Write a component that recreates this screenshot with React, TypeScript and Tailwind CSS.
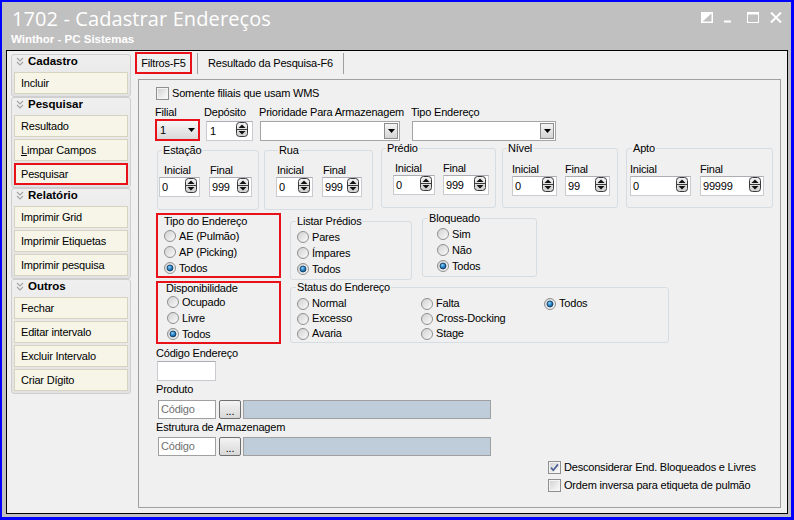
import React from "react";

function Tri() {
  return (
    <svg width="7" height="4" viewBox="0 0 7 4" className="shrink-0">
      <polygon points="0,0 7,0 3.5,4" fill="#000" />
    </svg>
  );
}

function Spin() {
  return (
    <svg width="12" height="15" viewBox="0 0 12 15" className="shrink-0 mb-[3px]">
      <defs>
        <linearGradient id="spg" x1="0" y1="0" x2="0" y2="1">
          <stop offset="0" stopColor="#f4f4f4" />
          <stop offset="1" stopColor="#cfcfcf" />
        </linearGradient>
      </defs>
      <rect x="0.5" y="0.5" width="11" height="14" rx="3" fill="url(#spg)" stroke="#3a3a3a" />
      <line x1="1" y1="7.5" x2="11" y2="7.5" stroke="#3a3a3a" />
      <path d="M2.5 6 L6 2.5 L9.5 6 Z" fill="#111" />
      <path d="M2.5 9 L6 12.5 L9.5 9 Z" fill="#111" />
    </svg>
  );
}

function Radio({ checked }: { checked?: boolean }) {
  return (
    <svg width="12" height="12" viewBox="0 0 12 12" className="shrink-0">
      <defs>
        <linearGradient id="rbg" x1="0" y1="0" x2="1" y2="1">
          <stop offset="0" stopColor="#cfcfcf" />
          <stop offset="1" stopColor="#fcfcfc" />
        </linearGradient>
        <radialGradient id="rdot" cx="0.4" cy="0.35" r="0.7">
          <stop offset="0" stopColor="#8fd3ff" />
          <stop offset="0.5" stopColor="#2a86c9" />
          <stop offset="1" stopColor="#0c4a7d" />
        </radialGradient>
      </defs>
      <circle cx="6" cy="6" r="5.5" fill="url(#rbg)" stroke="#8e8f8f" />
      {checked && <circle cx="6" cy="6" r="3" fill="url(#rdot)" stroke="#12395c" strokeWidth="0.8" />}
    </svg>
  );
}

function Check({ checked }: { checked?: boolean }) {
  return (
    <svg width="13" height="13" viewBox="0 0 13 13" className="shrink-0">
      <defs>
        <linearGradient id="cbg" x1="0" y1="0" x2="1" y2="1">
          <stop offset="0" stopColor="#d4d4d4" />
          <stop offset="1" stopColor="#fafafa" />
        </linearGradient>
      </defs>
      <rect x="0.5" y="0.5" width="12" height="12" fill="#f4f4f4" stroke="#8e8f8f" />
      <rect x="2" y="2" width="9" height="9" fill="url(#cbg)" />
      {checked && <path d="M3 6.6 L5.3 9.2 L10 3.4" fill="none" stroke="#4b5f95" strokeWidth="1.7" />}
    </svg>
  );
}

function Chevrons() {
  return (
    <svg width="8" height="9" viewBox="0 0 8 9" className="shrink-0 mt-[2px]">
      <path d="M1 1 L4 4 L7 1 M1 5 L4 8 L7 5" fill="none" stroke="#a3a3a3" strokeWidth="1.1" />
    </svg>
  );
}

function SideItem({ children, red }: { children: React.ReactNode; red?: boolean }) {
  return (
    <div
      className={
        red
          ? "h-[22px] flex items-center pl-[5px] bg-[#f6f5e7] border-2 border-[#e8111a]"
          : "h-[22px] flex items-center pl-[6px] bg-[#f6f5e7] border border-[#d6d4c0]"
      }
    >
      {children}
    </div>
  );
}

function SideGroup({ title, children }: { title: string; children: React.ReactNode }) {
  return (
    <div className="w-[120px] border border-[#cfcfcf] rounded-[3px] bg-gradient-to-b from-[#efefef] to-[#e2e2e2] pb-[2px]">
      <div className="h-[17px] flex items-start pl-[4px] gap-[4px]">
        <Chevrons />
        <span className="font-bold text-[11.5px] leading-[13px] tracking-[0px]">{title}</span>
      </div>
      <div className="flex flex-col gap-[2px] px-[2px]">{children}</div>
    </div>
  );
}

const inputCls = "bg-white border border-[#c9cbd0] border-t-[#abadb3]";

function SpinCol({
  label,
  value,
  w,
  colCls,
  labelCls,
}: {
  label: string;
  value: string;
  w: string;
  colCls: string;
  labelCls: string;
}) {
  return (
    <div className={`flex flex-col ${colCls}`}>
      <div className={`h-[13px] leading-[13px] ${labelCls}`}>{label}</div>
      <div className={`${inputCls} ${w} h-[20px] flex items-center justify-between pl-[2px] pr-[2px]`}>
        <span>{value}</span>
        <Spin />
      </div>
    </div>
  );
}

function Group({
  legend,
  legendCls,
  className,
  children,
}: {
  legend: string;
  legendCls: string;
  className: string;
  children: React.ReactNode;
}) {
  return (
    <fieldset className={`border border-[#d5dde3] rounded-[3px] min-w-0 ${className}`}>
      <legend className={`px-[1px] leading-[13px] ${legendCls}`}>{legend}</legend>
      {children}
    </fieldset>
  );
}

function RadioRow({ label, checked, cls }: { label: string; checked?: boolean; cls: string }) {
  return (
    <div className={`flex items-center ${cls}`}>
      <Radio checked={checked} />
      <span className="ml-[3px] whitespace-nowrap">{label}</span>
    </div>
  );
}

function Combo({ w }: { w: string }) {
  return (
    <div className={`bg-white border border-[#a5a5a5] ${w} h-[20px] flex items-center justify-end pr-[1px]`}>
      <div className="w-[14px] h-[16px] border border-[#8c8c8c] bg-gradient-to-b from-[#f4f4f4] to-[#d4d4d4] flex items-center justify-center">
        <Tri />
      </div>
    </div>
  );
}

export default function App() {
  return (
    <div className="w-[794px] h-[520px] bg-[#0000ff] pt-[2px] pl-[2px] pr-[3px] pb-[3px] font-['Liberation_Sans',Arial,sans-serif] text-[11px] tracking-[-0.2px] text-black">
      <div className="w-full h-full bg-[#c0c0c0] flex flex-col">
        {/* Title bar */}
        <div className="h-[48px] shrink-0 flex justify-between">
          <div className="flex flex-col pl-[10px] pt-[5px] text-white">
            <div className="font-['Open_Sans',sans-serif] text-[20px] leading-[24px] tracking-[0.1px]">
              1702 - Cadastrar Endereços
            </div>
            <div className="font-bold text-[11.5px] leading-[13px] tracking-[0px] mt-[2px] -ml-[1px]">
              Winthor - PC Sistemas
            </div>
          </div>
          <div className="flex items-start pt-[10px] pr-[9px]">
            <svg width="12" height="11" viewBox="0 0 12 11">
              <polygon points="0,0 12,0 0,11" fill="#fff" />
              <rect x="0.75" y="0.75" width="10.5" height="9.5" fill="none" stroke="#fff" strokeWidth="1.5" />
            </svg>
            <svg width="8" height="11" viewBox="0 0 8 11" className="ml-[11px]">
              <rect x="0" y="8.5" width="7" height="2" fill="#fff" />
            </svg>
            <svg width="12" height="11" viewBox="0 0 12 11" className="ml-[15px]">
              <rect x="0.5" y="0.5" width="11" height="10" fill="none" stroke="#fff" />
              <rect x="0" y="0" width="12" height="2.5" fill="#fff" />
            </svg>
            <svg width="12" height="11" viewBox="0 0 12 11" className="ml-[11px]">
              <path d="M1 0.5 L11 10.5 M11 0.5 L1 10.5" stroke="#fff" strokeWidth="2" />
            </svg>
          </div>
        </div>

        {/* Inner panel */}
        <div className="ml-[4px] mr-[3px] mb-[3px] flex-1 border border-black bg-[#f0f0f0] flex">
          {/* Sidebar */}
          <div className="pl-[4px] pt-[3px] flex flex-col">
            <SideGroup title="Cadastro">
              <SideItem>Incluir</SideItem>
            </SideGroup>
            <SideGroup title="Pesquisar">
              <SideItem>Resultado</SideItem>
              <SideItem>
                <span>
                  <span className="underline">L</span>impar Campos
                </span>
              </SideItem>
              <SideItem red>Pesquisar</SideItem>
            </SideGroup>
            <SideGroup title="Relatório">
              <SideItem>Imprimir Grid</SideItem>
              <SideItem>Imprimir Etiquetas</SideItem>
              <SideItem>Imprimir pesquisa</SideItem>
            </SideGroup>
            <SideGroup title="Outros">
              <SideItem>Fechar</SideItem>
              <SideItem>Editar intervalo</SideItem>
              <SideItem>Excluir Intervalo</SideItem>
              <SideItem>Criar Dígito</SideItem>
            </SideGroup>
          </div>

          {/* Main */}
          <div className="ml-[4px] pt-[1px] flex flex-col">
            <div className="flex items-center h-[22px]">
              <div className="w-[57px] h-[22px] border-2 border-[#e8111a] flex items-center justify-center whitespace-nowrap">
                Filtros-F5
              </div>
              <div className="ml-[5px] w-px h-[21px] bg-[#a0a0a0]" />
              <div className="ml-[10px] w-[125px] whitespace-nowrap">Resultado da Pesquisa-F6</div>
              <div className="ml-[10px] w-px h-[21px] bg-[#a0a0a0]" />
            </div>

            <div className="mt-[5px] ml-[3px] w-[643px] h-[429px] border border-[#a0a0a0] flex flex-col">
              {/* Row A */}
              <div className="mt-[7px] ml-[17px] flex items-center h-[13px]">
                <Check />
                <span className="ml-[3px]">Somente filiais que usam WMS</span>
              </div>

              {/* Row B */}
              <div className="mt-[6px] ml-[16px] flex">
                <div className="w-[46px] flex flex-col">
                  <div className="h-[13px] leading-[13px]">Filial</div>
                  <div className="w-[45px] h-[22px] border-2 border-[#e8111a] bg-gradient-to-b from-[#f7f7f7] to-[#d9d9d9] flex items-center justify-between pl-[3px] pr-[3px]">
                    <span>1</span>
                    <Tri />
                  </div>
                </div>
                <div className="ml-[3px] w-[49px] flex flex-col">
                  <div className="h-[13px] leading-[13px]">Depósito</div>
                  <div className={`${inputCls} ml-[2px] mt-[2px] w-[47px] h-[20px] flex items-center justify-between pl-[3px] pr-[4px]`}>
                    <span>1</span>
                    <Spin />
                  </div>
                </div>
                <div className="ml-[6px] w-[141px] flex flex-col">
                  <div className="h-[13px] leading-[13px] whitespace-nowrap">Prioridade Para Armazenagem</div>
                  <div className="ml-[1px] mt-[2px]">
                    <Combo w="w-[140px]" />
                  </div>
                </div>
                <div className="ml-[11px] w-[145px] flex flex-col">
                  <div className="h-[13px] leading-[13px] whitespace-nowrap">Tipo Endereço</div>
                  <div className="ml-[1px] mt-[2px]">
                    <Combo w="w-[144px]" />
                  </div>
                </div>
              </div>

              {/* Row C */}
              <div className="ml-[18px] flex items-start">
                <Group legend="Estação" legendCls="ml-[4px]" className="mt-[3px] w-[102px] h-[66px]">
                  <div className="flex mt-[7px]">
                    <SpinCol label="Inicial" value="0" w="w-[41px]" colCls="ml-[1px]" labelCls="ml-[5px]" />
                    <SpinCol label="Final" value="999" w="w-[43px]" colCls="ml-[9px]" labelCls="ml-[1px]" />
                  </div>
                </Group>
                <Group legend="Rua" legendCls="ml-[13px]" className="ml-[5px] mt-[3px] w-[109px] h-[66px]">
                  <div className="flex mt-[7px]">
                    <SpinCol label="Inicial" value="0" w="w-[37px]" colCls="ml-[11px]" labelCls="ml-[1px]" />
                    <SpinCol label="Final" value="999" w="w-[40px]" colCls="ml-[9px]" labelCls="ml-[1px]" />
                  </div>
                </Group>
                <Group legend="Prédio" legendCls="ml-[4px]" className="ml-[8px] mt-[1px] w-[115px] h-[66px]">
                  <div className="flex mt-[7px]">
                    <SpinCol label="Inicial" value="0" w="w-[42px]" colCls="ml-[11px]" labelCls="ml-[2px]" />
                    <SpinCol label="Final" value="999" w="w-[46px]" colCls="ml-[8px]" labelCls="ml-0" />
                  </div>
                </Group>
                <Group legend="Nível" legendCls="ml-[4px]" className="ml-[6px] mt-[1px] w-[116px] h-[66px]">
                  <div className="flex mt-[8px]">
                    <SpinCol label="Inicial" value="0" w="w-[45px]" colCls="ml-[9px]" labelCls="ml-0" />
                    <SpinCol label="Final" value="99" w="w-[45px]" colCls="ml-[8px]" labelCls="ml-0" />
                  </div>
                </Group>
                <Group legend="Apto" legendCls="ml-[5px]" className="ml-[8px] mt-[1px] w-[147px] h-[66px]">
                  <div className="flex mt-[8px]">
                    <SpinCol label="Inicial" value="0" w="w-[61px]" colCls="ml-[3px]" labelCls="ml-0" />
                    <SpinCol label="Final" value="99999" w="w-[64px]" colCls="ml-[9px]" labelCls="ml-0" />
                  </div>
                </Group>
              </div>

              {/* Row D */}
              <div className="mt-[3px] ml-[17px] flex items-start">
                <div className="w-[125px] h-[65px] border-2 border-[#e8111a] flex flex-col">
                  <div className="ml-[6px] leading-[13px] whitespace-nowrap">Tipo do Endereço</div>
                  <RadioRow label="AE (Pulmão)" cls="h-[16px] ml-[6px]" />
                  <RadioRow label="AP (Picking)" cls="h-[16px] ml-[6px]" />
                  <RadioRow label="Todos" checked cls="h-[16px] ml-[6px]" />
                </div>
                <Group legend="Listar Prédios" legendCls="ml-[5px]" className="ml-[9px] mt-[2px] w-[122px] h-[65px]">
                  <div className="flex flex-col mt-[1px]">
                    <RadioRow label="Pares" cls="h-[16px] ml-[6px]" />
                    <RadioRow label="Ímpares" cls="h-[16px] ml-[6px]" />
                    <RadioRow label="Todos" checked cls="h-[16px] ml-[6px]" />
                  </div>
                </Group>
                <Group legend="Bloqueado" legendCls="ml-[5px]" className="ml-[10px] -mt-[1px] w-[115px] h-[65px]">
                  <div className="flex flex-col mt-[1px]">
                    <RadioRow label="Sim" cls="h-[16px] ml-[14px]" />
                    <RadioRow label="Não" cls="h-[16px] ml-[14px]" />
                    <RadioRow label="Todos" checked cls="h-[16px] ml-[14px]" />
                  </div>
                </Group>
              </div>

              {/* Row E */}
              <div className="mt-[1px] ml-[17px] flex items-start">
                <div className="w-[125px] h-[63px] border-2 border-[#e8111a] flex flex-col">
                  <div className="ml-[8px] -mt-[1px] leading-[12px] whitespace-nowrap">Disponibilidade</div>
                  <RadioRow label="Ocupado" cls="h-[16px] ml-[9px]" />
                  <RadioRow label="Livre" cls="h-[16px] ml-[9px]" />
                  <RadioRow label="Todos" checked cls="h-[16px] ml-[9px]" />
                </div>
                <Group legend="Status do Endereço" legendCls="ml-[5px]" className="ml-[9px] w-[379px] h-[62px]">
                  <div className="flex mt-[2px]">
                    <div className="w-[130px] pl-[6px] flex flex-col">
                      <RadioRow label="Normal" cls="h-[15px]" />
                      <RadioRow label="Excesso" cls="h-[15px]" />
                      <RadioRow label="Avaria" cls="h-[15px]" />
                    </div>
                    <div className="w-[123px] flex flex-col">
                      <RadioRow label="Falta" cls="h-[15px]" />
                      <RadioRow label="Cross-Docking" cls="h-[15px]" />
                      <RadioRow label="Stage" cls="h-[15px]" />
                    </div>
                    <div className="flex flex-col">
                      <RadioRow label="Todos" checked cls="h-[15px]" />
                    </div>
                  </div>
                </Group>
              </div>

              {/* Row F */}
              <div className="mt-[3px] ml-[17px] leading-[13px]">Código Endereço</div>
              <div className={`${inputCls} mt-[1px] ml-[18px] w-[59px] h-[20px]`} />
              <div className="mt-[2px] ml-[17px] leading-[13px]">Produto</div>
              <div className="mt-[4px] ml-[19px] flex h-[19px]">
                <div className="w-[58px] h-[19px] bg-white border border-[#a0a0a0] flex items-center pl-[2px] text-[#6f6f6f]">
                  Código
                </div>
                <div className="ml-[3px] w-[22px] h-[19px] border border-[#707070] rounded-[2px] bg-gradient-to-b from-[#f4f4f4] to-[#d8d8d8] flex items-end justify-center leading-[12px] pb-[1px]">
                  ...
                </div>
                <div className="ml-[2px] w-[248px] h-[19px] bg-[#bfccd9] border border-[#a0a0a0]" />
              </div>
              <div className="mt-[2px] ml-[17px] leading-[13px]">Estrutura de Armazenagem</div>
              <div className="mt-[3px] ml-[19px] flex h-[19px]">
                <div className="w-[58px] h-[19px] bg-white border border-[#a0a0a0] flex items-center pl-[2px] text-[#6f6f6f]">
                  Código
                </div>
                <div className="ml-[3px] w-[22px] h-[19px] border border-[#707070] rounded-[2px] bg-gradient-to-b from-[#f4f4f4] to-[#d8d8d8] flex items-end justify-center leading-[12px] pb-[1px]">
                  ...
                </div>
                <div className="ml-[2px] w-[248px] h-[19px] bg-[#bfccd9] border border-[#a0a0a0]" />
              </div>

              {/* Row G */}
              <div className="mt-[5px] ml-[409px] flex flex-col gap-[5px]">
                <div className="h-[13px] flex items-center">
                  <Check checked />
                  <span className="ml-[3px] whitespace-nowrap">Desconsiderar End. Bloqueados e Livres</span>
                </div>
                <div className="h-[13px] flex items-center">
                  <Check />
                  <span className="ml-[3px] whitespace-nowrap">Ordem inversa para etiqueta de pulmão</span>
                </div>
              </div>
            </div>
          </div>
        </div>
      </div>
    </div>
  );
}
